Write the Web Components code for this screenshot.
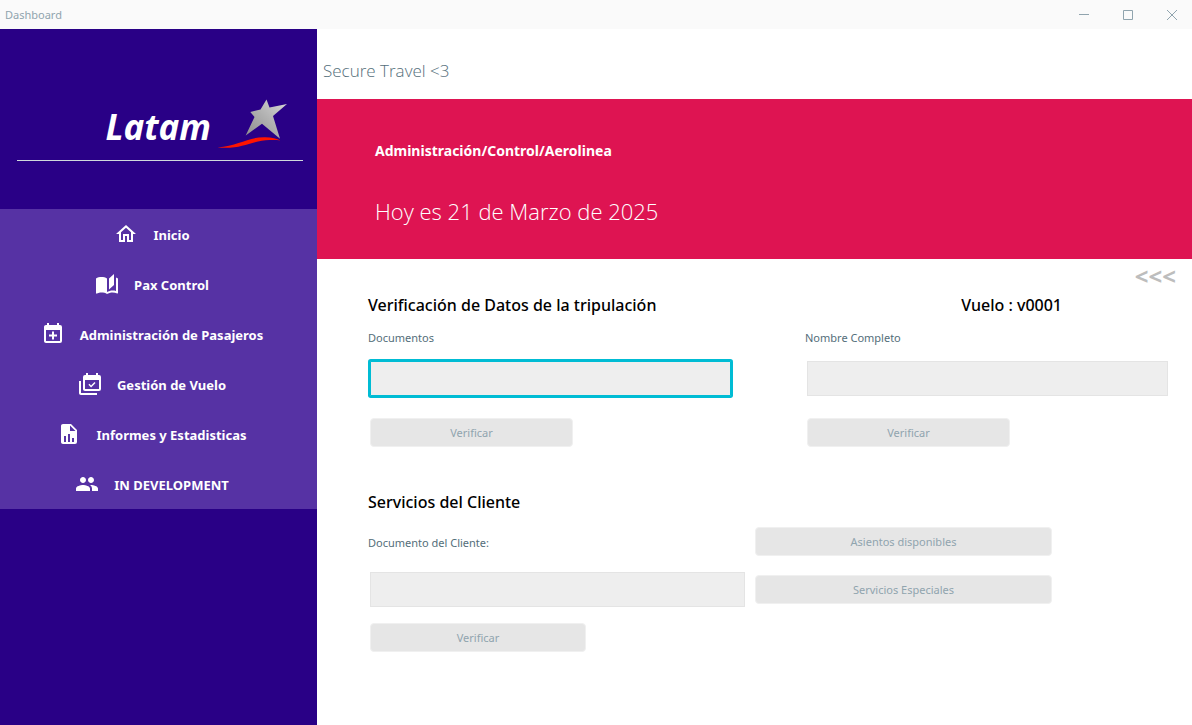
<!DOCTYPE html>
<html lang="es">
<head>
<meta charset="utf-8">
<title>Dashboard</title>
<style>
html, body { margin: 0; background: #fff; font-family: "Noto Sans", "Open Sans", sans-serif; }
</style>
</head>
<body>
<app-window></app-window>
<script>
const define = (name, html, setup) => {
  const template = document.createElement('template');
  template.innerHTML = html;
  customElements.define(name, class extends HTMLElement {
    connectedCallback() {
      if (this.shadowRoot) return;
      this.attachShadow({ mode: 'open' }).append(template.content.cloneNode(true));
      if (setup) setup(this, this.shadowRoot);
    }
  });
};

const icons = {
  home: 'M12 5.69L17 10.19V18H15V12H9V18H7V10.19L12 5.69M12 3L2 12H5V20H11V14H13V20H19V12H22',
  book: 'M19 2L14 6.5V17.5L19 13V2M6.5 5C4.55 5 2.45 5.4 1 6.5V21.16C1 21.41 1.25 21.66 1.5 21.66C1.6 21.66 1.65 21.59 1.75 21.59C3.1 20.94 5.05 20.5 6.5 20.5C8.45 20.5 10.55 20.9 12 22C13.35 21.15 15.8 20.5 17.5 20.5C19.15 20.5 20.85 20.81 22.25 21.56C22.35 21.61 22.4 21.59 22.5 21.59C22.75 21.59 23 21.34 23 21.09V6.5C22.4 6.05 21.75 5.75 21 5.5V19C19.9 18.65 18.7 18.5 17.5 18.5C15.8 18.5 13.35 19.15 12 20V6.5C10.55 5.4 8.45 5 6.5 5Z',
  add: 'M19 19V8H5V19H19M16 1H18V3H19A2 2 0 0 1 21 5V19A2 2 0 0 1 19 21H5C3.89 21 3 20.1 3 19V5C3 3.89 3.89 3 5 3H6V1H8V3H16V1M11 9.5H13V12.5H16V14.5H13V17.5H11V14.5H8V12.5H11V9.5Z',
  checks: 'M21 17V8H7V17H21M21 3A2 2 0 0 1 23 5V17A2 2 0 0 1 21 19H7C5.89 19 5 18.1 5 17V5A2 2 0 0 1 7 3H8V1H10V3H18V1H20V3H21M17.53 11.06L13.09 15.5L10.41 12.82L11.47 11.76L13.09 13.38L16.47 10L17.53 11.06M3 21H19V23H3C1.89 23 1 22.1 1 21V9H3V21Z',
  chart: 'M13 9H18.5L13 3.5V9M6 2H14L20 8V20A2 2 0 0 1 18 22H6C4.89 22 4 21.1 4 20V4C4 2.89 4.89 2 6 2M7 20H9V14H7V20M11 20H13V12H11V20M15 20H17V16H15V20Z',
  people: 'M16 11c1.66 0 2.99-1.34 2.99-3S17.66 5 16 5c-1.66 0-3 1.34-3 3s1.34 3 3 3zm-8 0c1.66 0 2.99-1.34 2.99-3S9.66 5 8 5C6.34 5 5 6.34 5 8s1.34 3 3 3zm0 2c-2.33 0-7 1.17-7 3.5V19h14v-2.5c0-2.33-4.67-3.5-7-3.5zm8 0c-.29 0-.62.02-.97.05 1.16.84 1.97 1.97 1.97 3.45V19h6v-2.5c0-2.33-4.67-3.5-7-3.5z'
};

define('title-bar', `
<style>
:host { display: flex; align-items: center; justify-content: space-between; height: 29px; padding-left: 5px; background: #fafafa; color: #90a4ae; font-size: 11px; }
div { display: flex; gap: 4px; height: 100%; }
button { display: grid; place-items: center; width: 40px; padding: 0; border: 0; background: none; color: inherit; }
svg { display: block; fill: none; stroke: currentColor; }
</style>
<slot></slot>
<div>
  <button type="button" aria-label="Minimizar"><svg width="10" height="10"><path d="M0 4.5H10"/></svg></button>
  <button type="button" aria-label="Maximizar"><svg width="10" height="10"><path d="M.5 .5h9v9h-9z"/></svg></button>
  <button type="button" aria-label="Cerrar"><svg width="10" height="10"><path d="M0 0L10 10M10 0L0 10"/></svg></button>
</div>`);

define('brand-logo', `
<style>
:host { display: flex; flex-direction: column; justify-content: flex-end; height: 132px; box-sizing: border-box; margin: 0 14px 48px 17px; border-bottom: 1px solid #cfd8dc; }
div { display: flex; align-items: flex-end; justify-content: flex-end; gap: 6px; padding: 0 14px 10px 0; }
span { color: #fff; font: italic bold 35px/46px "Noto Sans", "Open Sans", sans-serif; }
svg { display: block; }
</style>
<div>
  <span>Latam</span>
  <svg width="72" height="52" viewBox="217 98 72 52" role="img" aria-label="Estrella">
    <defs><linearGradient id="g" x1="1" y1="0" x2="0" y2="1"><stop offset="0" stop-color="#d8d8d8"/><stop offset=".5" stop-color="#b0b0b0"/><stop offset="1" stop-color="#8c8c8c"/></linearGradient></defs>
    <path fill="url(#g)" d="M266.5 99.5L269.5 107.5L287 104L273 116L280 138.8L262 123.8L245.7 135.5L254.5 117L250.3 112L260.5 109.5Z"/>
    <path fill="#ff1400" d="M217.5 147.5C238 146 247 137.5 264 137.2C271 137 277 138.5 280.5 140.5C274 139.7 266 140 258 141.5C245 144.5 238 149 217.5 147.5Z"/>
  </svg>
</div>`);

define('nav-item', `
<style>
:host { display: block; }
a { display: flex; align-items: center; justify-content: center; gap: 15px; height: 50px; padding-right: 13px; color: #fff; font-size: 13px; font-weight: bold; text-decoration: none; }
svg { width: 24px; height: 24px; fill: currentColor; }
span { padding-top: 2px; }
</style>
<a href="#"><svg viewBox="0 0 24 24" aria-hidden="true"><path/></svg><span><slot></slot></span></a>`,
  (host, root) => root.querySelector('path').setAttribute('d', icons[host.getAttribute('icon')]));

define('side-bar', `
<style>
:host { display: block; flex: 0 0 317px; background: #290086; }
nav { background: #5632a4; }
</style>
<brand-logo></brand-logo>
<nav>
  <nav-item icon="home">Inicio</nav-item>
  <nav-item icon="book">Pax Control</nav-item>
  <nav-item icon="add">Administración de Pasajeros</nav-item>
  <nav-item icon="checks">Gestión de Vuelo</nav-item>
  <nav-item icon="chart">Informes y Estadisticas</nav-item>
  <nav-item icon="people">IN DEVELOPMENT</nav-item>
</nav>`);

define('page-banner', `
<style>
:host { display: block; }
p { margin: 0; height: 70px; box-sizing: border-box; padding: 28px 6px 0; font: 300 17px/28px "Open Sans", sans-serif; color: #546e7a; }
header { display: flex; flex-direction: column; gap: 30px; height: 160px; box-sizing: border-box; padding: 40px 58px 0; background: #de1452; color: #fff; }
strong { font-size: 14px; line-height: 24px; }
h1 { margin: 0; font: 300 22px/36px "Open Sans", sans-serif; }
</style>
<p>Secure Travel &lt;3</p>
<header>
  <strong>Administración/Control/Aerolinea</strong>
  <h1>Hoy es 21 de Marzo de 2025</h1>
</header>`);

define('text-field', `
<style>
:host { display: block; font-size: 11px; color: #546e7a; }
label { display: block; line-height: 18px; margin-bottom: var(--label-gap, 14px); }
input { display: block; width: calc(100% - 4px); height: 35px; box-sizing: border-box; margin: 0 2px; padding: 0 8px; border: 1px solid #e4e4e4; border-radius: 0; background: #eee; font: inherit; outline: 0; }
:host([active]) input { border-color: #00bcd4; box-shadow: 0 0 0 2px #00bcd4; border-radius: 1px; }
</style>
<label for="field"><slot></slot></label>
<input id="field" type="text">`);

define('flat-button', `
<style>
:host { display: block; margin: 0 2px; }
button { display: block; width: 100%; height: 29px; padding: 0; border: 1px solid #f0f0f0; border-radius: 4px; background: #e6e6e6; color: #90a4ae; font: 11px "Noto Sans", sans-serif; }
</style>
<button type="button"><slot></slot></button>`);

define('crew-section', `
<style>
:host { display: grid; grid-template-columns: 1fr 1fr; column-gap: 72px; }
h2 { margin: 0 0 11px; font-size: 16px; line-height: 26px; font-weight: 500; color: #000; white-space: nowrap; }
.flight { justify-self: end; padding-right: 108px; }
flat-button { width: 203px; margin-top: 22px; }
</style>
<h2>Verificación de Datos de la tripulación</h2>
<h2 class="flight">Vuelo : v0001</h2>
<text-field active>Documentos</text-field>
<text-field>Nombre Completo</text-field>
<flat-button>Verificar</flat-button>
<flat-button>Verificar</flat-button>`);

define('client-section', `
<style>
:host { display: block; margin-top: 42px; }
h2 { margin: 0 0 12px; font-size: 16px; line-height: 26px; font-weight: 500; color: #000; }
.grid { display: grid; grid-template-columns: 379fr 301fr 110fr; column-gap: 6px; align-items: start; }
text-field { --label-gap: 20px; margin-top: 7px; }
.verify { width: 216px; margin-top: 16px; }
.options { display: flex; flex-direction: column; gap: 19px; }
</style>
<h2>Servicios del Cliente</h2>
<div class="grid">
  <div>
    <text-field>Documento del Cliente:</text-field>
    <flat-button class="verify">Verificar</flat-button>
  </div>
  <div class="options">
    <flat-button>Asientos disponibles</flat-button>
    <flat-button>Servicios Especiales</flat-button>
  </div>
</div>`);

define('app-window', `
<style>
:host { display: flex; flex-direction: column; min-height: 100vh; }
.body { display: flex; flex: 1; }
main { flex: 1; min-width: 0; }
.back { display: block; margin-left: auto; margin-right: 16px; height: 33px; padding: 0; border: 0; background: none; color: #bdbdbd; font: bold 24px/30px "Noto Sans", sans-serif; }
.content { padding: 0 22px 24px 51px; }
</style>
<title-bar>Dashboard</title-bar>
<div class="body">
  <side-bar></side-bar>
  <main>
    <page-banner></page-banner>
    <button class="back" type="button">&lt;&lt;&lt;</button>
    <div class="content">
      <crew-section></crew-section>
      <client-section></client-section>
    </div>
  </main>
</div>`);
</script>
</body>
</html>
